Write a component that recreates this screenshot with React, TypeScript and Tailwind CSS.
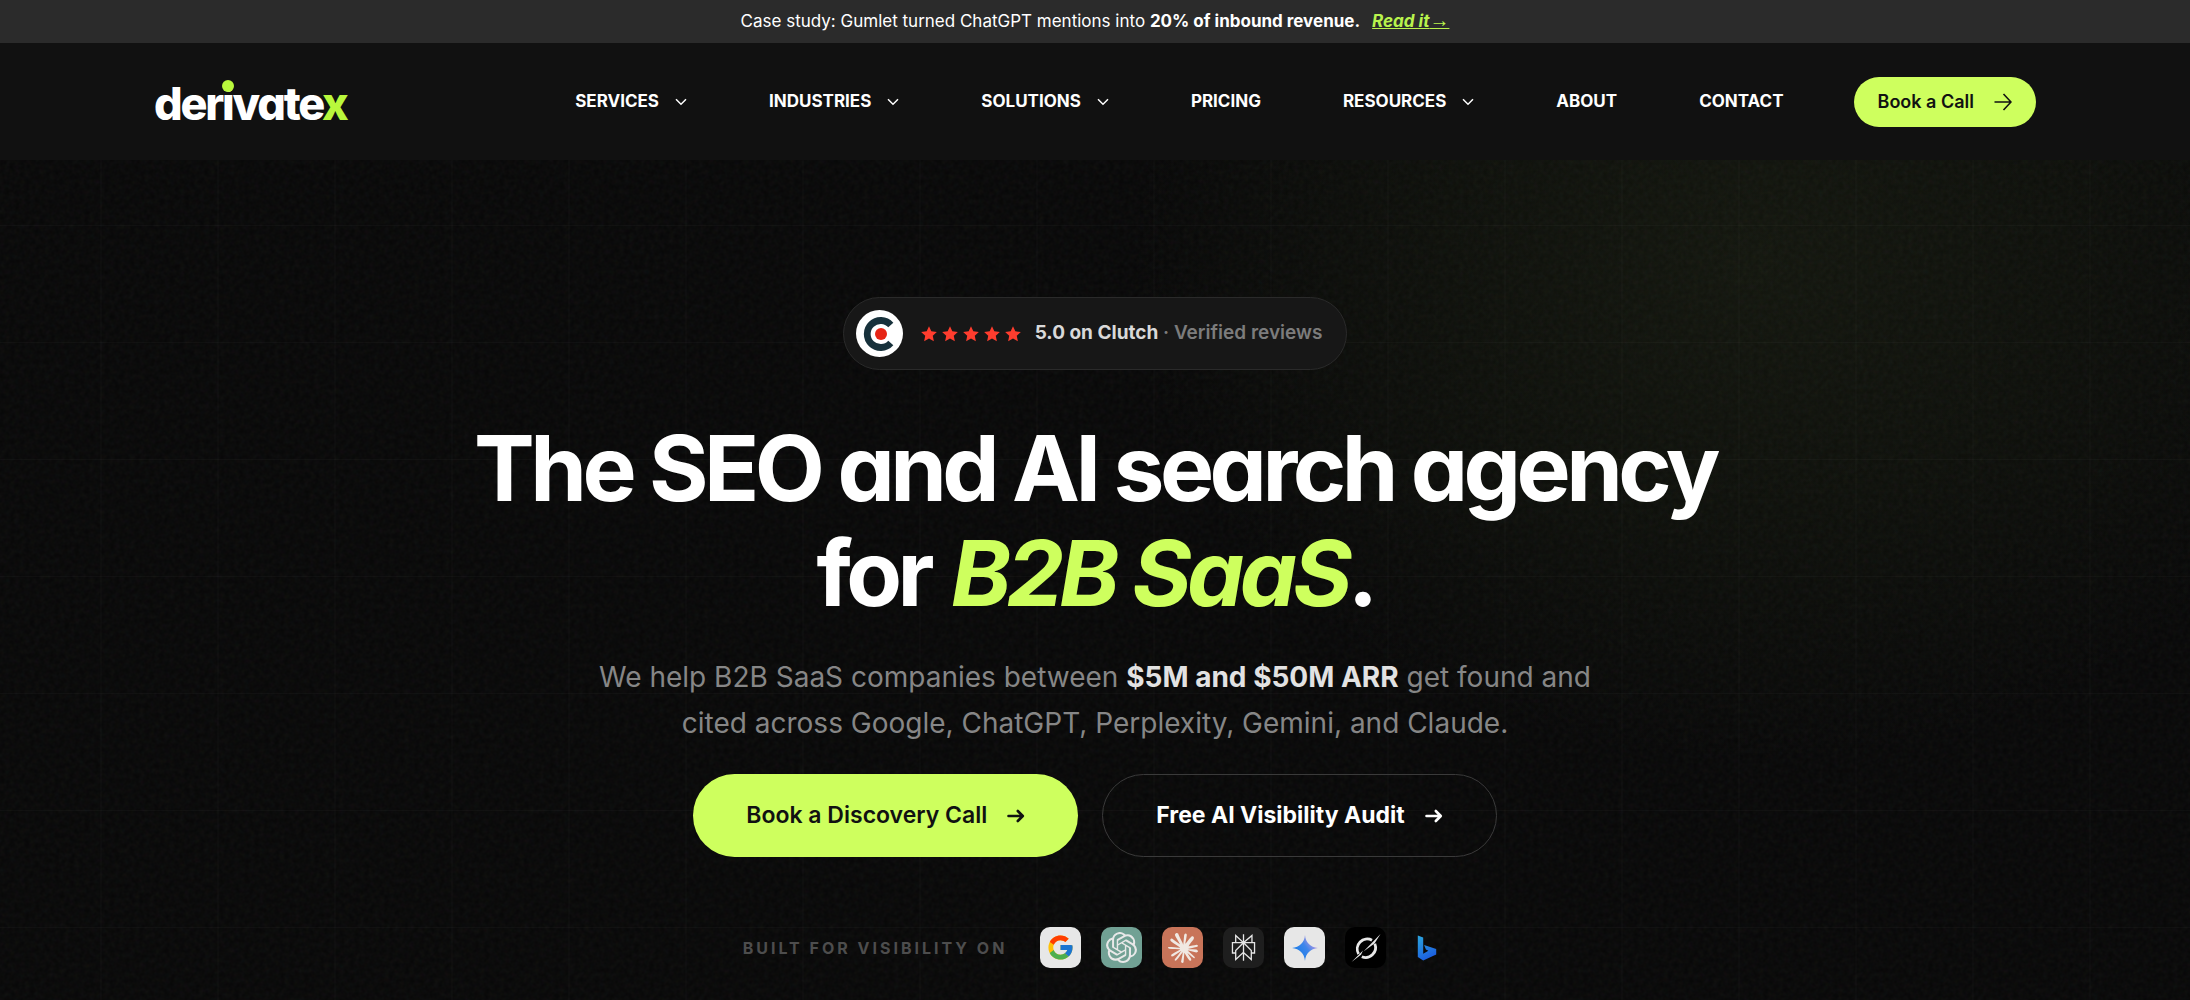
import { FcGoogle } from 'react-icons/fc';
import { SiClaude, SiOpenai, SiPerplexity } from 'react-icons/si';

type NavItem = {
    label: string;
    hasMenu?: boolean;
};

const navItems: NavItem[] = [
    { label: 'SERVICES', hasMenu: true },
    { label: 'INDUSTRIES', hasMenu: true },
    { label: 'SOLUTIONS', hasMenu: true },
    { label: 'PRICING' },
    { label: 'RESOURCES', hasMenu: true },
    { label: 'ABOUT' },
    { label: 'CONTACT' },
];

const Chevron = () => (
    <svg aria-hidden="true" className="h-2 w-3" fill="none" viewBox="0 0 12 8">
        <path d="M1 1.2l5 5 5-5" stroke="#fff" strokeWidth="1.5" />
    </svg>
);

const NavArrow = () => (
    <svg aria-hidden="true" className="size-[18px]" fill="none" viewBox="0 0 18 18">
        <path d="M0.5 9h16M9.5 1l7.5 8-7.5 8" stroke="#111" strokeWidth="1.6" />
    </svg>
);

const Arrow = () => (
    <svg aria-hidden="true" className="h-4 w-[18px]" fill="none" viewBox="0 0 18 16">
        <path
            d="M1.5 8h14M10.8 3l5 5-5 5"
            stroke="currentColor"
            strokeLinecap="round"
            strokeLinejoin="round"
            strokeWidth="2.6"
        />
    </svg>
);

const Star = () => (
    <svg aria-hidden="true" className="size-4" viewBox="0 0 20 20">
        <path
            d="M10 0.4l2.9 6.3 6.9.8-5.1 4.7 1.4 6.8L10 15.600l-6.100 3.400 1.400-6.800L.2 7.500l6.900-.8z"
            fill="#ff3d2e"
        />
    </svg>
);

const ClutchMark = () => (
    <svg aria-hidden="true" className="size-[47px]" viewBox="0 0 47 47">
        <circle cx="23.5" cy="23.5" fill="#fff" r="23.5" />
        <path
            d="M34.8 15A13.5 13.5 0 1 0 34.8 33"
            fill="none"
            stroke="#17313b"
            strokeWidth="6.8"
        />
        <circle cx="25" cy="24" fill="#e62415" r="6" />
    </svg>
);

const GeminiMark = () => (
    <svg aria-hidden="true" className="size-[26px]" viewBox="0 0 24 24">
        <defs>
            <linearGradient id="gemini" x1="0.2" x2="0.85" y1="0.7" y2="0.2">
                <stop offset="0" stopColor="#1c7de8" />
                <stop offset="0.5" stopColor="#3f86ea" />
                <stop offset="1" stopColor="#c99be0" />
            </linearGradient>
        </defs>
        <path
            d="M12 0c.6 7 5 11.4 12 12-7 .6-11.4 5-12 12-.6-7-5-11.4-12-12 7-.6 11.4-5 12-12z"
            fill="url(#gemini)"
        />
    </svg>
);

const GrokMark = () => (
    <svg aria-hidden="true" className="size-[30px]" fill="none" viewBox="0 0 30 30">
        <path d="M21 7.2A10 10 0 0 0 7.6 21" stroke="#e8e8e8" strokeWidth="2.8" />
        <path d="M10.8 23.8A10 10 0 0 0 23.8 10.8" stroke="#e8e8e8" strokeWidth="2.8" />
        <path d="M.5 29L12 17.6l-2 4.2zM12.5 18.5L29.5 1 23.5 10.5z" fill="#e8e8e8" />
    </svg>
);

const BingMark = () => (
    <svg aria-hidden="true" className="h-[26px] w-5" viewBox="0 0 20 26">
        <defs>
            <linearGradient id="bing" x1="0" x2="0.4" y1="0" y2="1">
                <stop offset="0" stopColor="#2ba6dc" />
                <stop offset="1" stopColor="#1c5fe0" />
            </linearGradient>
        </defs>
        <path
            d="M.8.5l5.4 1.9v16.4l5.2-3-2.5-1.2-1.8-4.5L19.2 14v5.5L6.2 25.5.8 22z"
            fill="url(#bing)"
        />
    </svg>
);

const engines = [
    { name: 'Google', tile: 'bg-[#e7e7e7]', icon: <FcGoogle className="size-[29px]" /> },
    { name: 'ChatGPT', tile: 'bg-[#71a194]', icon: <SiOpenai className="size-[31px] text-[#e8e8e8]" /> },
    { name: 'Claude', tile: 'bg-[#c87459]', icon: <SiClaude className="size-[30px] text-[#f0e8e2]" /> },
    { name: 'Perplexity', tile: 'bg-[#1e1e1e]', icon: <SiPerplexity className="size-[27px] text-[#e6e6e6]" /> },
    { name: 'Gemini', tile: 'bg-[#e7e7e7]', icon: <GeminiMark /> },
    { name: 'Grok', tile: 'bg-black', icon: <GrokMark /> },
    { name: 'Bing', tile: '', icon: <BingMark /> },
];

const Announcement = () => (
    <div className="flex h-[43px] items-center justify-center bg-[#2b2b2b] text-[17px] text-white">
        <p>
            Case study: Gumlet turned ChatGPT mentions into{' '}
            <strong className="font-bold">20% of inbound revenue.</strong>
            <a className="ml-3 font-bold italic text-[#b9f34d] underline" href="#case-study">
                Read it
                <span className="font-['Liberation_Sans',sans-serif] text-[20px] leading-none font-normal not-italic">
                    →
                </span>
            </a>
        </p>
    </div>
);

const Logo = () => (
    <a
        aria-label="derivatex"
        className="pt-1 text-[45px] leading-none font-extrabold tracking-tighter text-white [font-feature-settings:'cv11']"
        href="#home"
    >
        der
        <span className="relative">
            i
            <span className="absolute top-1 left-0 size-3 rounded-full bg-[#b9f83c]" />
        </span>
        vate<span className="text-[#b9f83c]">x</span>
    </a>
);

const Header = () => (
    <header className="flex h-[117px] items-center bg-[#111] px-[154px]">
        <Logo />
        <nav className="mr-[70px] ml-auto flex gap-[82px] text-[17px] font-bold text-white">
            {navItems.map((item) => (
                <a className="flex items-center gap-4" href={`#${item.label.toLowerCase()}`} key={item.label}>
                    {item.label}
                    {item.hasMenu && <Chevron />}
                </a>
            ))}
        </nav>
        <button
            className="flex h-[50px] items-center gap-5 rounded-full bg-[#ceff5e] px-6 text-[18px] font-semibold text-[#111]"
            type="button"
        >
            Book a Call
            <NavArrow />
        </button>
    </header>
);

const Backdrop = () => (
    <div aria-hidden="true" className="absolute inset-0">
        <div className="absolute inset-0 bg-[radial-gradient(ellipse_620px_500px_at_80%_100px,#12150d_0%,#0d0f0a_50%,transparent_100%)]" />
        <div className="absolute inset-0 bg-[linear-gradient(to_right,#ffffff06_1px,transparent_1px)] bg-[size:117px_117px] bg-[position:center_top]" />
        <div className="absolute inset-0 bg-[linear-gradient(to_bottom,#ffffff06_1px,transparent_1px)] bg-[size:117px_117px] bg-[position:0_65px]" />
        <svg className="absolute inset-0 size-full opacity-5">
            <filter id="grain">
                <feTurbulence baseFrequency="0.2" numOctaves="2" stitchTiles="stitch" type="fractalNoise" />
            </filter>
            <rect filter="url(#grain)" height="100%" width="100%" />
        </svg>
    </div>
);

const Rating = () => (
    <div className="flex h-[73px] items-center rounded-full border border-[#2a2a2a] bg-[#171717] pr-6 pl-3">
        <ClutchMark />
        <div aria-label="5 out of 5 stars" className="mr-3.5 ml-[18px] flex gap-[5px]" role="img">
            {[1, 2, 3, 4, 5].map((n) => (
                <Star key={n} />
            ))}
        </div>
        <p className="text-[19px] font-semibold text-[#7c7c7c]">
            <strong className="font-bold text-[#d9d9d9]">5.0 on Clutch</strong> · Verified reviews
        </p>
    </div>
);

const Hero = () => (
    <main className="relative flex-1 bg-[#070707]">
        <Backdrop />
        <div className="relative flex flex-col items-center pt-[137px] pb-8">
            <Rating />
            <h1 className="mt-[46px] text-center text-[91px] leading-[105px] font-bold tracking-tighter text-white [font-feature-settings:'cv11']">
                The SEO and AI search agency
                <br />
                for <em className="ml-1 text-[#ceff5e]">B2B SaaS</em>.
            </h1>
            <p className="mt-[28px] text-center text-[28px] leading-[46px] text-[#868686]">
                We help B2B SaaS companies between{' '}
                <strong className="font-bold text-[#e2e2e2]">$5M and $50M ARR</strong> get found and
                <br />
                cited across Google, ChatGPT, Perplexity, Gemini, and Claude.
            </p>
            <div className="mt-7 flex gap-6 text-[23px]">
                <button
                    className="flex h-[83px] items-center gap-5 rounded-full bg-[#ceff5e] px-[53px] font-semibold text-[#111]"
                    type="button"
                >
                    Book a Discovery Call
                    <Arrow />
                </button>
                <button
                    className="flex h-[83px] items-center gap-5 rounded-full border border-[#3a3a3a] px-[53px] font-bold text-white"
                    type="button"
                >
                    Free AI Visibility Audit
                    <Arrow />
                </button>
            </div>
            <div className="mt-[70px] flex items-center">
                <span className="mr-[33px] text-base font-bold tracking-[3px] text-[#4d4d4d]">
                    BUILT FOR VISIBILITY ON
                </span>
                <ul className="flex gap-5">
                    {engines.map((engine) => (
                        <li
                            aria-label={engine.name}
                            className={`flex size-[41px] items-center justify-center rounded-[10px] ${engine.tile}`}
                            key={engine.name}
                        >
                            {engine.icon}
                        </li>
                    ))}
                </ul>
            </div>
        </div>
    </main>
);

const App = () => {
    return (
        <div className="flex min-h-screen flex-col bg-[#070707] font-[Inter,sans-serif]">
            <Announcement />
            <Header />
            <Hero />
        </div>
    );
};

export default App;
